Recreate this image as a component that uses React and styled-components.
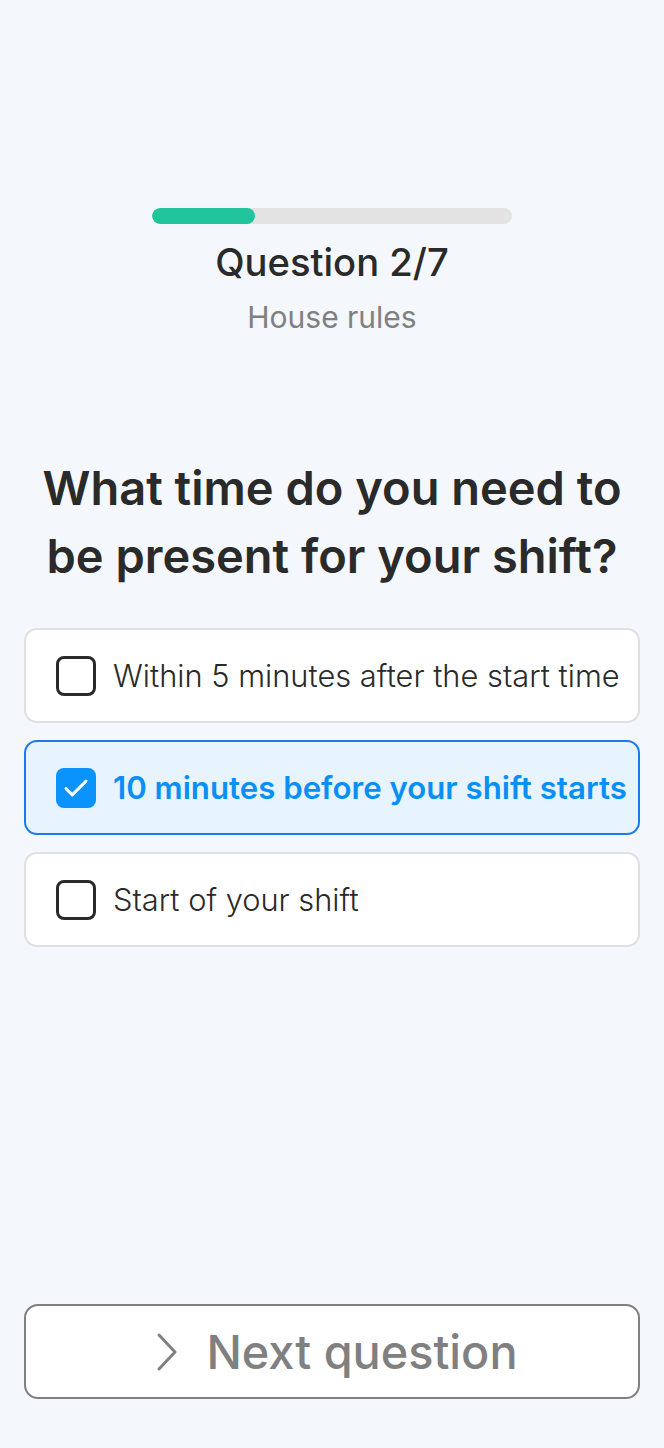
import React, { useState } from "react";
import styled, { createGlobalStyle } from "styled-components";

const GlobalStyle = createGlobalStyle`
  html, body {
    margin: 0;
    padding: 0;
    background: #F4F7FB;
  }
  body {
    font-family: Inter, "Noto Sans", "Liberation Sans", sans-serif;
  }
`;

const options = [
  "Within 5 minutes after the start time",
  "10 minutes before your shift starts",
  "Start of your shift",
];

const App = () => {
  const [selected, setSelected] = useState(1);

  return (
    <Page>
      <GlobalStyle />
      <Header>
        <Progress>
          <ProgressFill style={{ width: `${(2 / 7) * 100}%` }} />
        </Progress>
        <Counter>Question 2/7</Counter>
        <Category>House rules</Category>
      </Header>

      <QuestionTitle>What time do you need to be present for your shift?</QuestionTitle>

      <OptionList>
        {options.map((text, i) => (
          <Option key={i} $active={selected === i} onClick={() => setSelected(i)}>
            <Box $active={selected === i}>
              {selected === i && (
                <svg width="30" height="30" viewBox="0 0 24 24" fill="none">
                  <path d="M4 12.5l5 5L20 6.5" stroke="#fff" strokeWidth="2.3" strokeLinecap="round" strokeLinejoin="round" />
                </svg>
              )}
            </Box>
            <OptionText $active={selected === i}>{text}</OptionText>
          </Option>
        ))}
      </OptionList>

      <Spacer />

      <NextButton>
        <svg width="22" height="40" viewBox="0 0 22 40" fill="none">
          <path d="M3 3l16 17L3 37" stroke="#808080" strokeWidth="3" strokeLinecap="round" strokeLinejoin="round" />
        </svg>
        Next question
      </NextButton>
    </Page>
  );
};

export default App;

const Page = styled.div`
  min-height: 1448px;
  box-sizing: border-box;
  padding: 208px 24px 49px;
  display: flex;
  flex-direction: column;
`;

const Header = styled.div`
  display: flex;
  flex-direction: column;
  align-items: center;
`;

const Progress = styled.div`
  width: 360px;
  height: 16px;
  border-radius: 8px;
  background: #E3E3E3;
  overflow: hidden;
`;

const ProgressFill = styled.div`
  height: 100%;
  border-radius: 8px;
  background: #22C59B;
`;

const Counter = styled.div`
  margin-top: 15px;
  font-size: 38.2px;
  line-height: 46px;
  font-weight: 500;
  color: #2A2A2A;
`;

const Category = styled.div`
  margin-top: 14px;
  font-size: 30px;
  line-height: 36px;
  font-weight: 400;
  color: #808080;
`;

const QuestionTitle = styled.h1`
  margin: 119px 0 0;
  text-align: center;
  font-size: 47px;
  line-height: 68px;
  font-weight: 600;
  color: #2A2A2A;
`;

const OptionList = styled.div`
  margin-top: 38px;
  display: flex;
  flex-direction: column;
  gap: 17px;
`;

const Option = styled.div`
  height: 95px;
  box-sizing: border-box;
  display: flex;
  align-items: center;
  gap: 17px;
  padding: 0 30px;
  border-radius: 13px;
  border: 2px solid ${(p) => (p.$active ? "#1A7BEF" : "#E0E0E0")};
  background: ${(p) => (p.$active ? "#E7F3FD" : "#FFFFFF")};
  cursor: pointer;
`;

const Box = styled.div`
  width: 40px;
  height: 40px;
  flex: none;
  box-sizing: border-box;
  border-radius: 8px;
  border: ${(p) => (p.$active ? "none" : "3px solid #2A2A2A")};
  background: ${(p) => (p.$active ? "#0A93FC" : "transparent")};
  display: flex;
  align-items: center;
  justify-content: center;
`;

const OptionText = styled.span`
  font-size: ${(p) => (p.$active ? "31.2px" : "30.8px")};
  font-weight: ${(p) => (p.$active ? 600 : 300)};
  color: ${(p) => (p.$active ? "#0A8FF5" : "#2A2A2A")};
  white-space: nowrap;
`;

const Spacer = styled.div`
  flex: 1;
`;

const NextButton = styled.button`
  height: 95px;
  box-sizing: border-box;
  display: flex;
  align-items: center;
  justify-content: center;
  gap: 28px;
  border: 2px solid #808080;
  border-radius: 14px;
  background: #FFFFFF;
  font-family: Inter, "Noto Sans", "Liberation Sans", sans-serif;
  font-size: 46.8px;
  font-weight: 500;
  color: #808080;
  padding: 0 0 0 10px;
`;
